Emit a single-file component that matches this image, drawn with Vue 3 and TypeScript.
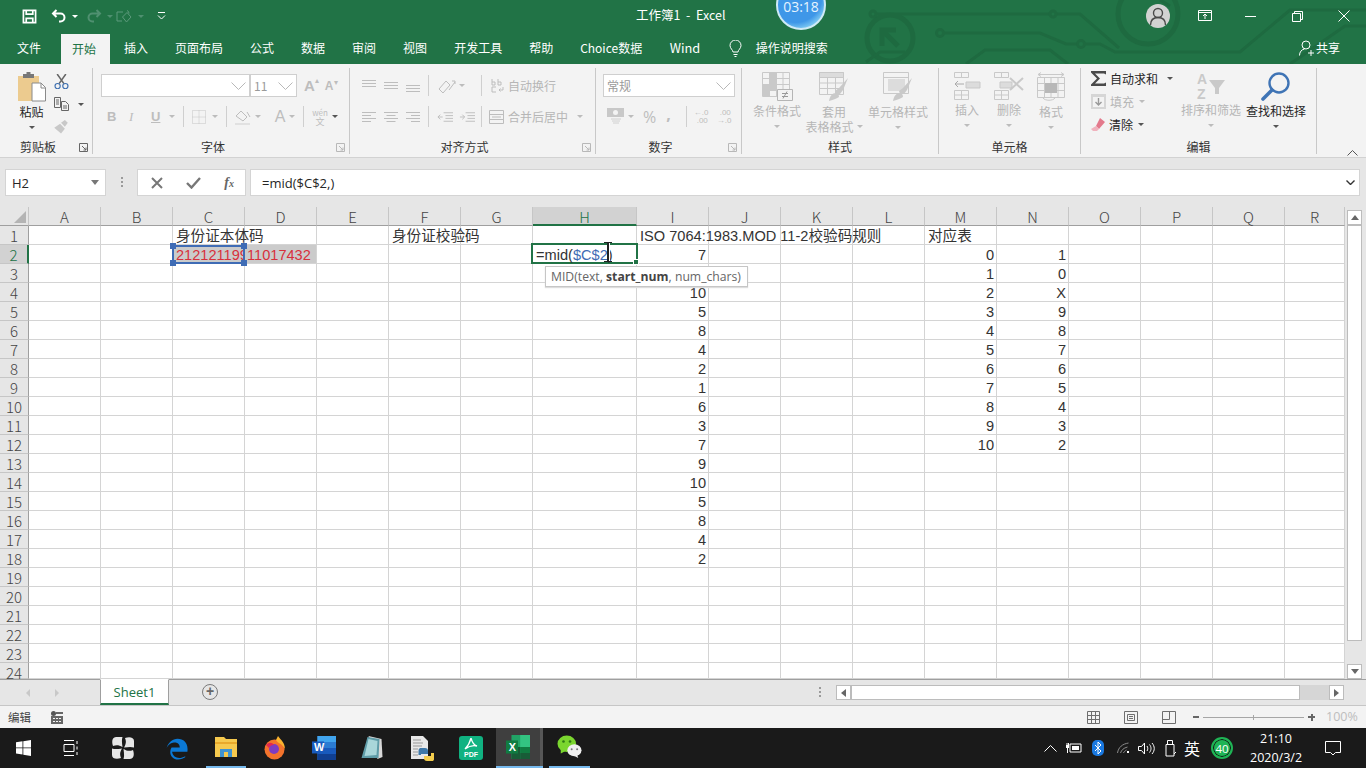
<script setup lang="ts">
// Excel window mock: ribbon, formula bar, sheet grid, status bar and Windows taskbar.
const colNames = ['A', 'B', 'C', 'D', 'E', 'F', 'G', 'H', 'I', 'J', 'K', 'L', 'M', 'N', 'O', 'P', 'Q', 'R'];
const rowNums = Array.from({ length: 24 }, (_, i) => i + 1);

const tabs = ['文件', '开始', '插入', '页面布局', '公式', '数据', '审阅', '视图', '开发工具', '帮助', 'Choice数据', 'Wind'];

const iCol = [7, 9, 10, 5, 8, 4, 2, 1, 6, 3, 7, 9, 10, 5, 8, 4, 2];
const mCol = [0, 1, 2, 3, 4, 5, 6, 7, 8, 9, 10];
const nCol = ['1', '0', 'X', '9', '8', '7', '6', '5', '4', '3', '2'];

function cellText(col: string, row: number): string {
  if (row === 1) {
    if (col === 'C') return '身份证本体码';
    if (col === 'F') return '身份证校验码';
    if (col === 'I') return 'ISO 7064:1983.MOD 11-2校验码规则';
    if (col === 'M') return '对应表';
  }
  if (row === 2 && col === 'C') return '212121199';
  if (row === 2 && col === 'D') return '11017432';
  if (col === 'I' && row >= 2 && row <= 18) return String(iCol[row - 2]);
  if (col === 'M' && row >= 2 && row <= 12) return String(mCol[row - 2]);
  if (col === 'N' && row >= 2 && row <= 12) return nCol[row - 2];
  return '';
}

function cellClass(col: string, row: number): string[] {
  const out: string[] = [];
  if (row > 1 && (col === 'I' || col === 'M' || col === 'N')) out.push('num');
  if (row === 2 && (col === 'C' || col === 'D')) out.push('marked');
  return out;
}
</script>

<template>
  <div class="app">
    <header class="chrome">
      <svg class="circuit" width="1366" height="64" viewBox="0 0 1366 64" fill="none" stroke="#1e6a40" stroke-width="3">
        <circle cx="890" cy="38" r="23" stroke-width="5" />
        <path d="M882 46V30h14M882 30l16 16" stroke-width="5" />
        <circle cx="1148" cy="14" r="30" stroke-width="5" />
        <circle cx="873" cy="14" r="3" />
        <path d="M876 14H1050M1057 14H1080L1119 48" />
        <circle cx="1053" cy="14" r="3" />
        <circle cx="940" cy="33" r="3.5" />
        <path d="M944 33H1040L1066 44H1078" />
        <circle cx="1081" cy="44" r="3.5" />
        <path d="M1085 44H1100L1115 52H1240L1290 10H1366" />
        <path d="M866 62L880 52H905M966 64L985 50H1050L1068 64M1290 64L1345 26H1366M1160 0L1170 6" />
      </svg>

      <div class="titlebar">
        <div class="qat">
          <svg width="15" height="15" viewBox="0 0 16 16" fill="none" stroke="#fff" stroke-width="1.8">
            <path d="M1.500 1.500h13v13h-13z" /><path d="M4.500 1.500v4h7v-4M4.500 14.500v-4.500h7v4.500" />
          </svg>
          <svg class="q-undo" width="16" height="14" viewBox="0 0 16 14" fill="none" stroke="#fff" stroke-width="2">
            <path d="M5.500 1L2 4.500 5.500 8M2 4.500h7.500a4 4 0 0 1 0 8H8" />
          </svg>
          <i class="tri tri-w" />
          <svg class="q-redo" width="16" height="14" viewBox="0 0 16 14" fill="none" stroke="#4f9070" stroke-width="2">
            <path d="M10.500 1L14 4.500 10.500 8M14 4.500H6.500a4 4 0 0 0 0 8H8" />
          </svg>
          <i class="tri tri-dim" />
          <svg class="q-form" width="17" height="16" viewBox="0 0 17 16" fill="none" stroke="#5d9a7c">
            <path d="M1 4h6M1 4v9h5M6.500 9L11 4.500 15 9l-4.500 5zM11 2.500a3 3 0 0 1 2 3" />
          </svg>
          <i class="tri tri-dim" />
          <svg class="q-more" width="9" height="8" viewBox="0 0 9 8" fill="none" stroke="#fff">
            <path d="M1 .5h7" /><path d="M1 3.500l3.500 3.500L8 3.500" />
          </svg>
        </div>
        <div class="doc-title">工作簿1&nbsp; -&nbsp; Excel</div>
        <div class="timer">03:18</div>
        <div class="winctl">
          <span class="avatar">
            <svg width="20" height="20" viewBox="0 0 20 20" fill="none" stroke="#4a4a4a" stroke-width="1.400">
              <circle cx="10" cy="7" r="4.500" /><path d="M2.500 19c0-5 3-7.500 7.500-7.500s7.500 2.500 7.500 7.500" />
            </svg>
          </span>
          <svg class="w-display" width="14" height="12" viewBox="0 0 14 12" fill="none" stroke="#fff">
            <path d="M.5 .5h13v10H.5zM.5 2.500h13M7 9V4.500M5 6l2-2 2 2" />
          </svg>
          <svg class="w-min" width="11" height="11" viewBox="0 0 11 11" stroke="#fff"><path d="M0 5.500h11" /></svg>
          <svg class="w-max" width="11" height="11" viewBox="0 0 11 11" fill="none" stroke="#fff">
            <path d="M.5 2.500h8v8h-8zM2.500 2.500v-2h8v8h-2" />
          </svg>
          <svg class="w-close" width="12" height="12" viewBox="0 0 12 12" stroke="#fff"><path d="M.5 .5l11 11M11.500 .5l-11 11" /></svg>
        </div>
      </div>

      <nav class="tabs">
        <span v-for="t in tabs" :key="t" class="tab" :class="{ active: t === '开始' }">{{ t }}</span>
        <svg class="bulb" width="13" height="17" viewBox="0 0 13 17" fill="none" stroke="#fff">
          <path d="M4 12c0-2-3-3.500-3-6.500a5.500 5.500 0 0 1 11 0c0 3-3 4.500-3 6.500zM4.500 14.500h4M5.500 16.500h2" />
        </svg>
        <span class="tab search">操作说明搜索</span>
        <span class="share">
          <svg width="15" height="16" viewBox="0 0 15 16" fill="none" stroke="#fff">
            <circle cx="7" cy="5" r="4" /><path d="M.5 15.500c0-3.500 2-6 5-6.500M9 13h6M12 10v6" />
          </svg>
          共享
        </span>
      </nav>
    </header>

    <section class="ribbon">
      <div class="group g-clip with-launcher">
        <div class="body clip-body">
          <div class="big paste">
            <svg width="29" height="30" viewBox="0 0 29 30">
              <path d="M1 4h21v25H1z" fill="#eccb8f" />
              <path d="M6 2h11v4H6z" fill="#777" /><path d="M9.500 0h4v3h-4z" fill="#777" />
              <path d="M15 11h9l4.500 4.500V29H15z" fill="#fff" stroke="#8a8a8a" />
              <path d="M24 11v5h4.500" fill="none" stroke="#8a8a8a" />
            </svg>
            <span class="on">粘贴</span>
            <i class="tri tri-k" />
          </div>
          <div class="clip-tools">
            <svg width="15" height="16" viewBox="0 0 15 16" fill="none">
              <path d="M3 0l7 10M12 0L5 10" stroke="#666" stroke-width="1.600" />
              <circle cx="3.500" cy="12.500" r="2.700" stroke="#3d6fb0" stroke-width="1.200" />
              <circle cx="11.500" cy="12.500" r="2.700" stroke="#3d6fb0" stroke-width="1.200" />
            </svg>
            <span class="copy-row">
              <svg width="15" height="14" viewBox="0 0 15 14" fill="none" stroke="#666">
                <path d="M.5 .5h6v10h-6zM2 3h3M2 5h3M2 7h3" /><path d="M7.500 4.500h4l3 3v6h-7z" fill="#f3f3f3" /><path d="M9 9h4M9 11h4" />
              </svg>
              <i class="tri tri-k" />
            </span>
            <svg width="15" height="15" viewBox="0 0 15 15">
              <path d="M0 9l6-4 5 5-4 5zM7 4l4-3 3 3-3 4z" fill="#c8c8c8" />
            </svg>
          </div>
        </div>
        <div class="label">剪贴板</div>
        <svg class="launcher dark" width="9" height="9" viewBox="0 0 9 9" fill="none"><path d="M.5 .5h8v8h-8zM3 3l4 4M7 4.500V7H4.500" /></svg>
      </div>

      <div class="group g-font with-launcher">
        <div class="body stack">
          <div class="row">
            <span class="combo font-name"><svg class="chev" width="15" height="8" viewBox="0 0 15 8"><path d="M.5 .5l7 7 7-7" /></svg></span>
            <span class="combo font-size"><b>11</b><svg class="chev" width="15" height="8" viewBox="0 0 15 8"><path d="M.5 .5l7 7 7-7" /></svg></span>
            <span class="grow-a big-a">A<sup>▴</sup></span>
            <span class="grow-a small-a">A<sup>▾</sup></span>
          </div>
          <div class="row row2 font-row">
            <span class="fmt bold">B</span>
            <span class="fmt ital">I</span>
            <span class="fmt under">U</span>
            <i class="tri" />
            <em class="sep" />
            <svg width="14" height="14" viewBox="0 0 14 14" fill="none" stroke="#c4c4c4" stroke-dasharray="1 1"><path d="M.5 .5h13v13H.5zM7 .5v13M.5 7h13" /></svg>
            <i class="tri t6" />
            <em class="sep" />
            <svg class="fill-ic" width="16" height="16" viewBox="0 0 16 16" fill="none" stroke="#bdbdbd">
              <path d="M1 7l5-5 6 6-4 4z" /><path d="M12 3l3 5" /><path d="M0 14h15v2H0z" fill="#e1e1e1" stroke="none" />
            </svg>
            <i class="tri" />
            <span class="fmt font-color">A</span>
            <i class="tri t1" />
            <em class="sep" />
            <span class="wen"><small>wén</small><span>文</span></span>
            <i class="tri tri-k" />
          </div>
        </div>
        <div class="label">字体</div>
        <svg class="launcher" width="9" height="9" viewBox="0 0 9 9" fill="none"><path d="M.5 .5h8v8h-8zM3 3l4 4M7 4.500V7H4.500" /></svg>
      </div>

      <div class="group g-align with-launcher">
        <div class="body stack">
          <div class="row align-row">
            <svg class="lines" width="14" height="12" viewBox="0 0 14 12"><path d="M0 .5h14M0 3.500h14M0 6.500h14" /></svg>
            <svg class="lines" width="14" height="12" viewBox="0 0 14 12"><path d="M0 2.500h14M0 5.500h14M0 8.500h14" /></svg>
            <svg class="lines" width="14" height="12" viewBox="0 0 14 12"><path d="M0 5.500h14M0 8.500h14M0 11.500h14" /></svg>
            <em class="sep" />
            <svg class="orient" width="20" height="16" viewBox="0 0 20 16" fill="none" stroke="#bdbdbd"><path d="M2 11l7-8 4 4-7 8zM12 12l6-8M15 3h3v3" /></svg>
            <i class="tri orient-tri" />
            <em class="sep wrap-sep" />
            <svg class="wrap-ic" width="13" height="15" viewBox="0 0 13 15" fill="none" stroke="#bdbdbd"><path d="M1 1v6M1 4h3v3H1M7 1v6M7 4h3v3H7M5 9H1v5h4M12 9v3H8M9.500 10.500L8 12l1.500 1.500" /></svg>
            <span class="txt">自动换行</span>
          </div>
          <div class="row row2 align-row">
            <svg class="lines" width="14" height="12" viewBox="0 0 14 12"><path d="M0 1.500h14M0 4.500h9M0 7.500h14M0 10.500h9" /></svg>
            <svg class="lines" width="14" height="12" viewBox="0 0 14 12"><path d="M0 1.500h14M2.500 4.500h9M0 7.500h14M2.500 10.500h9" /></svg>
            <svg class="lines" width="14" height="12" viewBox="0 0 14 12"><path d="M0 1.500h14M5 4.500h9M0 7.500h14M5 10.500h9" /></svg>
            <em class="sep" />
            <svg class="lines" width="16" height="12" viewBox="0 0 17 12"><path d="M7 1.500h10M9 4.500h8M9 7.500h8M7 10.500h10M6 6H1M3.500 3.500L1 6l2.500 2.500" /></svg>
            <svg class="lines indent-2" width="16" height="12" viewBox="0 0 17 12"><path d="M7 1.500h10M9 4.500h8M9 7.500h8M7 10.500h10M1 6h5M3.500 3.500L6 6 3.500 8.500" /></svg>
            <em class="sep merge-sep" />
            <svg class="merge-ic" width="15" height="14" viewBox="0 0 15 14" fill="none" stroke="#bdbdbd"><path d="M.5 .5h14v13H.5zM.5 4.500h14M.5 9.500h14M3 7h9" /></svg>
            <span class="txt">合并后居中</span>
            <i class="tri merge-tri" />
          </div>
        </div>
        <div class="label">对齐方式</div>
        <svg class="launcher" width="9" height="9" viewBox="0 0 9 9" fill="none"><path d="M.5 .5h8v8h-8zM3 3l4 4M7 4.500V7H4.500" /></svg>
      </div>

      <div class="group g-num with-launcher">
        <div class="body stack">
          <div class="row">
            <span class="combo num-fmt"><b>常规</b><svg class="chev" width="15" height="8" viewBox="0 0 15 8"><path d="M.5 .5l7 7 7-7" /></svg></span>
          </div>
          <div class="row row2 num-row">
            <svg width="18" height="17" viewBox="0 0 18 17"><path d="M0 0h17v9H0z" fill="#c8c8c8" /><circle cx="8.500" cy="4.500" r="2.500" fill="#f3f3f3" /><path d="M4 11h10M5 13h8M6 15h6" stroke="#d0d0d0" /></svg>
            <i class="tri" />
            <span class="pct">%</span>
            <span class="comma">,</span>
            <em class="sep" />
            <span class="dec"><small>←.0</small><small>.00</small></span>
            <span class="dec"><small>.00</small><small>→.0</small></span>
          </div>
        </div>
        <div class="label">数字</div>
        <svg class="launcher" width="9" height="9" viewBox="0 0 9 9" fill="none"><path d="M.5 .5h8v8h-8zM3 3l4 4M7 4.500V7H4.500" /></svg>
      </div>

      <div class="group g-style">
        <div class="body bigs">
          <div class="big cond">
            <svg width="31" height="29" viewBox="0 0 31 29" fill="none" stroke="#c9c9c9">
              <path d="M.5 .5h27v24H.5zM.5 6.500h27M.5 12.500h27M.5 18.500h27M7.500 .5v24M14.500 .5v24M21 .5v24" />
              <path d="M8 1h7v12H8zM1 13h14v6H1zM1 19h7v5H1z" fill="#c9c9c9" stroke="none" />
              <path d="M15.500 17.500h15v11h-15z" fill="#f3f3f3" stroke="#b5b5b5" />
              <path d="M20 21.500h6M20 24.500h6M25 19.500l-4 7" stroke="#999" />
            </svg>
            <span>条件格式</span>
            <i class="tri" />
          </div>
          <div class="big table-fmt">
            <svg width="30" height="30" viewBox="0 0 30 30" fill="none" stroke="#c9c9c9">
              <path d="M.5 .5h24v22H.5zM.5 5.500h24M.5 11h24M.5 16.500h24M8.500 .5v22M16.500 .5v22" />
              <path d="M.5 .5h24v5H.5z" fill="#dcdcdc" />
              <path d="M29 6l-9 10-4 3 1 3 4 0 3-4z" fill="#c9c9c9" stroke="none" />
              <path d="M10 29c1-5 3-8 7-8 2 0 3 2 3 4-2 1-5 3-10 4z" fill="#c9c9c9" stroke="none" />
            </svg>
            <span>套用</span>
            <span class="with-tri">表格格式<i class="tri" /></span>
          </div>
          <div class="big cell-fmt">
            <svg width="30" height="30" viewBox="0 0 30 30" fill="none" stroke="#c9c9c9">
              <path d="M.5 .5h25v21H.5zM.5 5.500h25" />
              <path d="M5 7h17v12H5z" fill="#dcdcdc" stroke="none" />
              <path d="M29 6l-9 10-4 3 1 3 4 0 3-4z" fill="#c9c9c9" stroke="none" />
              <path d="M10 29c1-5 3-8 7-8 2 0 3 2 3 4-2 1-5 3-10 4z" fill="#c9c9c9" stroke="none" />
            </svg>
            <span>单元格样式</span>
            <i class="tri" />
          </div>
        </div>
        <div class="label">样式</div>
      </div>

      <div class="group g-cells">
        <div class="body bigs">
          <div class="big cell-op">
            <svg width="27" height="28" viewBox="0 0 27 28" fill="none" stroke="#c9c9c9">
              <path d="M.5 .5h7v5h-7zM7.500 .5h7v5h-7zM.5 18.500h7v9h-7zM7.500 18.500h7v9h-7zM.5 23h14" />
              <path d="M12 10h14v6H12z" fill="#dcdcdc" /><path d="M1 12h9M4 9l-3 3 3 3" stroke="#aaa" />
            </svg>
            <span>插入</span><i class="tri" />
          </div>
          <div class="big cell-op">
            <svg width="30" height="28" viewBox="0 0 30 28" fill="none" stroke="#c9c9c9">
              <path d="M.5 .5h7v5h-7zM7.500 .5h7v5h-7zM.5 18.500h7v9h-7zM7.500 18.500h7v9h-7zM.5 23h14" />
              <path d="M6 10h12v6H6z" fill="#dcdcdc" /><path d="M16 6l13 12M29 6L16 18" stroke-width="2" />
            </svg>
            <span>删除</span><i class="tri" />
          </div>
          <div class="big cell-op">
            <svg width="28" height="30" viewBox="0 0 28 30" fill="none" stroke="#c9c9c9">
              <path d="M.5 5.500h27v20H.5zM.5 11.500h27M.5 18.500h27M7.500 5.500v20M14 5.500v20M21 5.500v20" />
              <path d="M8 11h12v10H8z" fill="#b8b8b8" stroke="none" />
              <path d="M1 2.500h26M4 .5l-3 2 3 2M24 .5l3 2-3 2M6 26c2 3 10 3 12 0" />
            </svg>
            <span>格式</span><i class="tri" />
          </div>
        </div>
        <div class="label">单元格</div>
      </div>

      <div class="group g-edit">
        <div class="body edit-body">
          <div class="edit-col">
            <span class="edit-item on">
              <svg width="15" height="15" viewBox="0 0 15 15"><path d="M0 0h15v3.500L13 2.500H4l5 5-5 5h9l2-1V15H0v-1.500L6 7.500 0 1.500z" fill="#4a4a4a" /></svg>
              自动求和<i class="tri tri-k auto-tri" />
            </span>
            <span class="edit-item">
              <svg width="15" height="15" viewBox="0 0 15 15" fill="none"><path d="M0 0h15v15H0z" fill="#d6d6d6" /><path d="M2 3h11v10H2z" fill="#f3f3f3" /><path d="M7.500 4v7M4.500 8l3 3 3-3" stroke="#9a9a9a" stroke-width="1.400" /></svg>
              填充<i class="tri" />
            </span>
            <span class="edit-item on">
              <svg width="14" height="13" viewBox="0 0 14 13"><path d="M9 0l5 4-6 7-3-3z" fill="#e3798c" /><path d="M5 8l3 3-2 2H2L0 11z" fill="#f0b2bd" /></svg>
              清除<i class="tri tri-k" />
            </span>
          </div>
          <div class="big sort">
            <svg width="30" height="28" viewBox="0 0 30 28" fill="none">
              <text x="1" y="12" font-size="14" font-weight="700" fill="#c9c9c9" font-family="Liberation Sans">A</text>
              <text x="1" y="27" font-size="14" font-weight="700" fill="#c9c9c9" font-family="Liberation Sans">Z</text>
              <path d="M13 8h16l-6 8v6h-4v-6z" fill="#c9c9c9" />
            </svg>
            <span>排序和筛选</span><i class="tri" />
          </div>
          <div class="big find on">
            <svg width="30" height="29" viewBox="0 0 30 29" fill="none" stroke="#3f74b5">
              <circle cx="18" cy="11" r="9.500" stroke-width="2.400" />
              <path d="M11 18L2 27" stroke-width="3.600" stroke-linecap="round" />
            </svg>
            <span>查找和选择</span><i class="tri tri-k" />
          </div>
        </div>
        <div class="label">编辑</div>
      </div>
      <svg class="collapse" width="11" height="6" viewBox="0 0 11 6" fill="none" stroke="#555"><path d="M.5 5.500l5-5 5 5" /></svg>
    </section>

    <div class="formula">
      <div class="namebox">H2<i class="tri tri-g" /></div>
      <div class="grip" />
      <div class="fx-box">
        <svg width="12" height="12" viewBox="0 0 12 12" stroke="#777" stroke-width="2"><path d="M1 1l10 10M11 1L1 11" /></svg>
        <svg width="15" height="12" viewBox="0 0 15 12" fill="none" stroke="#777" stroke-width="2.400"><path d="M1 6l4.500 4.500L14 1" /></svg>
        <span class="fx">f<small>x</small></span>
      </div>
      <div class="input">
        <span>=mid($C$2,)</span>
        <svg width="9" height="5" viewBox="0 0 9 5" fill="none" stroke="#333" stroke-width="1.400"><path d="M.5 .5l4 4 4-4" /></svg>
      </div>
    </div>

    <div class="sheet">
      <div class="grid">
        <div class="hd corner"><i /></div>
        <div v-for="c in colNames" :key="c" class="hd col-hd" :class="{ cur: c === 'H' }">{{ c }}</div>
        <template v-for="r in rowNums" :key="r">
          <div class="hd row-hd" :class="{ cur: r === 2 }">{{ r }}</div>
          <div v-for="c in colNames" :key="c" class="cell" :class="cellClass(c, r)">{{ cellText(c, r) }}</div>
        </template>
      </div>

      <div class="ref-box"><i class="h1" /><i class="h2" /><i class="h3" /><i class="h4" /></div>
      <div class="editor">=mid(<span>$C$2</span>)<i /></div>
      <div class="ibeam" />
      <div class="tip">MID(text, <b>start_num</b>, num_chars)</div>

      <div class="vscroll">
        <span class="sb-btn"><i class="arrow up" /></span>
        <span class="sb-thumb" />
        <span class="sb-btn"><i class="arrow down" /></span>
      </div>
    </div>

    <div class="tabbar">
      <span class="nav-arrow left" />
      <span class="nav-arrow right" />
      <span class="sheet-tab">Sheet1</span>
      <span class="add">+</span>
      <span class="dots" />
      <div class="hscroll">
        <span class="sb-btn"><i class="arrow left-a" /></span>
        <span class="h-thumb" />
        <span class="sb-btn"><i class="arrow right-a" /></span>
      </div>
    </div>

    <div class="status">
      <span class="mode">编辑</span>
      <svg width="12" height="13" viewBox="0 0 12 13"><circle cx="2.500" cy="2.500" r="2.500" fill="#555" /><path d="M5 1h7v2H5zM0 5h12v8H0z" fill="#666" /><path d="M2 7h2v1H2zM5 7h2v1H5zM8 7h2v1H8zM2 10h2v1H2zM5 10h2v1H5zM8 10h2v1H8z" fill="#f3f3f3" /></svg>
      <span class="views">
        <svg width="13" height="13" viewBox="0 0 13 13" fill="none" stroke="#6e6e6e"><path d="M.5 .5h12v12H.5zM4.500 .5v12M8.500 .5v12M.5 4.500h12M.5 8.500h12" /></svg>
        <svg width="14" height="13" viewBox="0 0 14 13" fill="none" stroke="#6e6e6e"><path d="M.5 .5h13v12H.5zM3.500 3.500h7v6h-7zM5 5.500h4M5 7.500h4" /></svg>
        <svg width="14" height="13" viewBox="0 0 14 13" fill="none" stroke="#6e6e6e"><path d="M.5 .5h13v12H.5zM.5 8.500h7v-8" /></svg>
      </span>
      <span class="zoom">
        <i class="z-minus" />
        <i class="z-track"><u /></i>
        <i class="z-plus" />
      </span>
      <span class="pct-label">100%</span>
    </div>

    <footer class="taskbar">
      <svg class="t-win" width="15" height="16" viewBox="0 0 15 16" fill="#fff"><path d="M0 2.300l6.500-1v6.200H0zM7.300 1.200L15 0v7.500H7.300zM0 8.300h6.500v6.300l-6.500-1zM7.300 8.300H15V16l-7.700-1.200z" /></svg>
      <svg class="t-view" width="15" height="16" viewBox="0 0 15 16" fill="none" stroke="#fff"><path d="M1 .5h10M1 15.500h10M1 4.500h10v7H1zM14 1v3M14 6.500v3M14 12v3" /></svg>
      <svg class="t-fan" width="22" height="22" viewBox="0 0 22 22" fill="#e6e6e6">
        <path d="M4 0h6.500C9.500 3 10 6 10.500 10 7 8 4.500 7.500 1 9 -.5 5 0 0 4 0z" />
        <path d="M22 4v6.500C19 9.500 16 10 12 10.500 14 7 14.500 4.500 13 1c4-1.500 9-1 9 3z" />
        <path d="M18 22h-6.500c1-3 .5-6 0-10 3.500 2 6 2.500 9.500 1 1.500 4 1 9-3 9z" />
        <path d="M0 18v-6.500c3 1 6 .5 10 0-2 3.500-2.500 6-1 9.500-4 1.500-9 1-9-3z" />
      </svg>
      <svg class="t-edge" width="22" height="23" viewBox="0 0 20 21" fill="none"><path d="M17.500 17.500c-5 3-11 2-12-4h14c1-8-3-12-9-12C6 1.500 2 5 .5 10 2.500 6 6 5 8 5c3 0 4.500 2 4.500 4.500H5c-3 5 0 11 6 11 2.500 0 5-1 6.500-2z" fill="#0b78d4" /></svg>
      <span class="t-folder">
        <svg width="22" height="20" viewBox="0 0 22 20"><path d="M0 0h9l2 2h11v18H0z" fill="#f6c94e" /><path d="M0 5h22v2H0z" fill="#e9a92b" /><path d="M5 12h12v8H5z" fill="#3f93d1" /><path d="M9 15h4v5H9z" fill="#f6c94e" /></svg>
      </span>
      <svg class="t-fox" width="23" height="24" viewBox="0 0 21 24"><circle cx="10.500" cy="13.500" r="10" fill="#f3732c" /><path d="M14 0c3 4 7 7 7 13-3-6-7-5-9-9z" fill="#fbb32f" /><circle cx="10" cy="13" r="5" fill="#7d3cc1" /><path d="M2 9c3-3 6-3 8 0-3 0-4 1-5 3z" fill="#e22850" /></svg>
      <svg class="t-word" width="24" height="24" viewBox="0 0 22 22"><path d="M5 0h17v22H5z" fill="#2b7cd3" /><path d="M5 0h17v5.500H5z" fill="#41a5ee" /><path d="M5 11h17v5.500H5z" fill="#185abd" /><path d="M5 16.500h17V22H5z" fill="#103f91" /><path d="M0 5h11v11H0z" fill="#185abd" /><text x="1.800" y="14" font-size="10" font-weight="700" fill="#fff" font-family="Liberation Sans">W</text></svg>
      <svg class="t-note" width="22" height="24" viewBox="0 0 21 24"><path d="M7 0l13 3 1 18-5 2z" fill="#d8d8d8" /><path d="M6 1l12 2-1 19-17 0z" fill="#5f9ca8" /><path d="M7 3l9 2-1 14-12 1z" fill="#a9d6da" /></svg>
      <svg class="t-py" width="23" height="25" viewBox="0 0 23 25"><path d="M0 0h12l5 5v18H0z" fill="#e8e8e8" /><path d="M2 4h8M2 7h10M2 10h9M2 13h5M2 16h5M2 19h5" stroke="#999" /><path d="M9 12h5a3 3 0 0 1 3 3v3H10v1H7.500v-4a3 3 0 0 1 1.500-3z" fill="#3e78a9" /><path d="M22 25h-6a3 3 0 0 1-3-3v-2h7v-3h3v5a3 3 0 0 1-1 3z" fill="#f4cd4d" /></svg>
      <span class="t-pdf">
        <svg width="14" height="12" viewBox="0 0 14 12" fill="none" stroke="#fff" stroke-width="1.300"><path d="M7 0c-1 4-3 8-6 11 4-3 8-4 12-3-3-1-5-4-6-8z" /></svg>
        <b>PDF</b>
      </span>
      <span class="t-excel">
        <svg width="24" height="24" viewBox="0 0 22 22"><path d="M5 0h17v22H5z" fill="#21a366" /><path d="M13 0h9v11h-9z" fill="#33c481" /><path d="M5 11h8v11H5z" fill="#185c37" /><path d="M13 11h9v5.500h-9z" fill="#107c41" /><path d="M13 16.500h9V22h-9z" fill="#185c37" /><path d="M0 5h11v12H0z" fill="#107c41" /><text x="2.500" y="14.500" font-size="10" font-weight="700" fill="#fff" font-family="Liberation Sans">X</text></svg>
      </span>
      <span class="t-chat">
        <svg width="25" height="24" viewBox="0 0 22 22"><ellipse cx="8.500" cy="8" rx="8.500" ry="7.500" fill="#7bd62f" /><path d="M3 13l0 4 4-2z" fill="#7bd62f" /><circle cx="5.500" cy="6" r="1.200" fill="#2e7a14" /><circle cx="11.500" cy="6" r="1.200" fill="#2e7a14" /><ellipse cx="15.500" cy="14" rx="6.500" ry="5.500" fill="#f0f0f0" /><path d="M18 18l1 3-4-2z" fill="#f0f0f0" /><circle cx="13" cy="13" r=".9" fill="#777" /><circle cx="18" cy="13" r=".9" fill="#777" /></svg>
      </span>

      <div class="tray">
        <svg width="13" height="7" viewBox="0 0 13 7" fill="none" stroke="#fff"><path d="M.5 6.500l6-6 6 6" /></svg>
        <svg class="tr-batt" width="16" height="10" viewBox="0 0 16 10"><path d="M4 1h11v8H4z" fill="none" stroke="#fff" /><path d="M6 3h7v4H6z" fill="#fff" /><path d="M0 2h3v3H0z" fill="#fff" /><path d="M1 0v2M2.500 0v2M1.500 5v5" stroke="#fff" /></svg>
        <svg class="tr-bt" width="12" height="16" viewBox="0 0 12 16"><rect width="12" height="16" rx="5" fill="#1978e0" /><path d="M3 5l6 6-3 3V2l3 3-6 6" fill="none" stroke="#fff" /></svg>
        <svg class="tr-wifi" width="13" height="12" viewBox="0 0 13 12" fill="none" stroke="#8b8b8b"><path d="M.5 11c1-6 5-9 11-10M3.500 11c1-3 3-5 7-6M6.500 11c.5-1.500 1.500-2 3-3" /><path d="M10 9h2v2h-2z" fill="#fff" stroke="none" /></svg>
        <svg class="tr-vol" width="17" height="13" viewBox="0 0 17 13" fill="none" stroke="#fff"><path d="M.5 4.500h3l3-3.500v11l-3-3.500h-3zM9 4c1 1.500 1 3.500 0 5M11.500 2.500c2 2.500 2 5.500 0 8M14 1c3 3.500 3 7.500 0 11" /></svg>
        <svg class="tr-usb" width="12" height="17" viewBox="0 0 12 17" fill="none" stroke="#fff"><path d="M2.500 .5h5v4h-5zM1 4.500h8V16H1zM9 14l2-2" /></svg>
        <span class="ime">英</span>
        <span class="badge">40</span>
        <span class="clock"><span>21:10</span><span>2020/3/2</span></span>
        <svg class="tr-note" width="16" height="15" viewBox="0 0 16 15" fill="none" stroke="#fff"><path d="M.5 .5h15v11h-5l-2.500 2.500L5.500 11.500h-5z" /></svg>
      </div>
    </footer>
  </div>
</template>

<style>
html, body { margin: 0; overflow: hidden; background: #fff; }
</style>

<style scoped>
.app {
  width: 1366px;
  height: 768px;
  display: flex;
  flex-direction: column;
  overflow: hidden;
  position: relative;
  font-family: "Noto Sans CJK SC", "Open Sans", sans-serif;
  font-size: 12px;
  color: #262626;
}
.app i, .app em { display: block; font-style: normal; }

/* title + tabs */
.chrome { position: relative; height: 64px; background: #217346; flex: none; color: #fff; }
.circuit { position: absolute; left: 0; top: 0; }
.titlebar { position: relative; height: 32px; display: flex; align-items: center; }
.qat { display: flex; align-items: center; padding-left: 22px; width: 500px; }
.q-undo { margin-left: 14px; }
.q-redo { margin-left: 8px; }
.q-form { margin-left: 3px; }
.q-more { margin-left: 13px; }
.tri { width: 0; height: 0; border: 3px solid transparent; border-top: 3.500px solid #bcbcbc; border-bottom: 0; flex: none; }
.tri-w { border-top-color: #fff; margin-left: 5px; }
.tri-dim { border-top-color: #4f9070; margin-left: 5px; }
.tri-k { border-top-color: #555; }
.tri-g { border-top-color: #777; border-width: 4px; border-top-width: 5px; border-bottom: 0; }
.doc-title { position: absolute; left: 636px; top: 5px; font-size: 12.500px; }
.timer {
  position: absolute;
  left: 776px;
  top: -20px;
  width: 50px;
  height: 50px;
  box-sizing: border-box;
  border-radius: 50%;
  padding-top: 18px;
  text-align: center;
  background: radial-gradient(circle at 38% 30%, #3f97e8 0 62%, #7cc8f2 78%, #cdeaf7 100%);
  border: 2px solid #cfeaf6;
  font: 14px/13px "Open Sans", sans-serif;
  color: #e6f4ff;
}
.winctl { position: absolute; left: 1146px; top: 3px; height: 26px; display: flex; align-items: center; }
.avatar { width: 24px; height: 24px; border-radius: 50%; background: #d2d2d2; display: flex; align-items: center; justify-content: center; overflow: hidden; }
.w-display { margin-left: 28px; }
.w-min { margin-left: 33px; }
.w-max { margin-left: 36px; }
.w-close { margin-left: 35px; }

.tabs { position: relative; height: 32px; display: flex; align-items: stretch; padding-left: 4px; }
.tab { display: flex; align-items: center; padding: 0 13.500px; font-size: 12px; line-height: 1; }
.tab:nth-child(1) { padding-left: 13px; padding-right: 20px; }
.tab.active { background: #f3f3f3; color: #217346; margin-top: 2px; padding: 0 14px 0 11px; }
.tab:nth-child(3) { padding-left: 14px; }
.tab:nth-child(11) { padding-right: 14px; }
.tab:nth-child(12) { font-size: 12.800px; }
.bulb { align-self: center; margin-left: 15px; }
.search { padding-left: 14px; }
.share { position: absolute; left: 1299px; top: 7px; display: flex; align-items: center; gap: 2px; font-size: 12px; }

/* ribbon */
.ribbon { position: relative; height: 94px; background: #f3f3f3; border-bottom: 1px solid #d2d2d2; display: flex; flex: none; box-sizing: border-box; }
.group { position: relative; display: flex; flex-direction: column; box-sizing: border-box; height: 86px; margin-top: 4px; border-right: 1px solid #c8c8c8; }
.body { flex: 1; min-height: 0; }
.label { height: 22px; line-height: 22px; text-align: center; font-size: 12px; color: #333; margin-top: 2px; margin-bottom: -4px; }
.with-launcher .label { padding-right: 16px; }
.launcher { position: absolute; right: 4px; bottom: 2px; stroke: #b8b8b8; }
.launcher.dark { stroke: #666; }
.g-clip { width: 93px; }
.g-font { width: 257px; }
.g-align { width: 246px; }
.g-num { width: 146px; }
.g-style { width: 197px; }
.g-cells { width: 142px; }
.g-edit { width: 236px; }
.collapse { position: absolute; left: 1347px; top: 86px; }

.big { display: flex; flex-direction: column; align-items: center; flex: none; font-size: 12px; line-height: 15px; color: #b6b6b6; }
.big svg { flex: none; margin-bottom: 2px; }
.big .tri { margin-top: 7px; }
.big.on, .on { color: #262626; }
.clip-body { display: flex; padding: 4px 0 0 17px; }
.paste { width: 29px; }
.clip-tools { display: flex; flex-direction: column; align-items: flex-start; gap: 8px; margin-left: 8px; padding-top: 2px; }
.copy-row { display: flex; align-items: center; gap: 9px; }

.stack { display: flex; flex-direction: column; padding-top: 7px; margin-top: -1px; }
.row { display: flex; align-items: center; height: 23px; flex: none; }
.row2 { margin-top: 8px; }
.combo { display: flex; align-items: center; justify-content: space-between; box-sizing: border-box; height: 23px; background: #fff; border: 1px solid #cfcfcf; padding: 0 3px 0 3px; color: #9a9a9a; font-size: 12px; }
.combo b { font-weight: 400; }
.chev { fill: none; stroke: #b8b8b8; }
.font-name { width: 149px; margin-left: 8px; justify-content: flex-end; }
.font-size { width: 47px; }
.grow-a { color: #bdbdbd; font: 700 15px "Liberation Sans", sans-serif; display: flex; }
.grow-a sup { font-size: 8px; line-height: 8px; font-weight: 400; }
.big-a { margin-left: 7px; font-size: 15px; }
.small-a { margin-left: 6px; font-size: 12px; }
.font-row { padding-left: 14px; }
.fmt { font-family: "Liberation Sans", sans-serif; color: #bdbdbd; font-size: 13px; }
.bold { font-weight: 700; width: 22px; }
.ital { font-style: italic; width: 22px; font-family: "Liberation Serif", serif; }
.under { font-weight: 700; text-decoration: underline; width: 14px; }
.font-row .sep { margin: 0 8px; }
.sep { width: 1px; height: 21px; background: #cfcfcf; flex: none; }
.font-row .tri { margin-left: 4px; }
.font-row .t6 { margin-left: 6px; }
.font-row .t1 { margin-left: 1px; }
.font-color { font-size: 16px; margin-left: 11px; width: 16px; text-align: center; }
.wen { display: flex; flex-direction: column; align-items: center; color: #bdbdbd; font-size: 9px; line-height: 9px; width: 16px; }
.wen small { font-size: 8px; }

.align-row { padding-left: 12px; gap: 8px; color: #bdbdbd; }
.lines { fill: none; stroke: #bdbdbd; flex: none; }
.indent-2 { margin-left: -2px; }
.orient-tri { margin-left: -6px; }
.wrap-sep { margin-left: 8px; }
.wrap-ic { margin-left: 1px; }
.merge-sep { margin-left: -2px; }
.merge-ic { margin-left: -1px; }
.txt { font-size: 12px; color: #b6b6b6; margin-left: -4px; white-space: nowrap; }
.merge-tri { margin-left: 1px; }
.num-fmt { width: 132px; margin-left: 7px; }
.num-row { padding-left: 11px; color: #bdbdbd; }
.num-row .tri { margin-left: 3px; }
.pct { font: 16px "Open Sans", sans-serif; margin-left: 9px; }
.comma { font: 700 16px "Open Sans", sans-serif; margin-left: 10px; margin-top: -6px; }
.num-row .sep { margin-left: 15px; margin-right: 7px; }
.dec { display: flex; flex-direction: column; font: 8px/8px "Liberation Sans", sans-serif; width: 14px; margin-right: 9px; text-align: right; white-space: nowrap; }
.dec small { font-size: 8px; }

.bigs { display: flex; padding-top: 4px; }
.cond { width: 70px; }
.table-fmt { width: 44px; }
.cell-fmt { width: 84px; }
.with-tri { display: flex; align-items: center; gap: 3px; white-space: nowrap; }
.with-tri .tri { margin-top: 0; }
.cell-op { width: 42px; }
.g-cells .bigs { padding-left: 7px; }
.edit-body { display: flex; padding: 0 0 0 10px; margin-top: -1px; }
.edit-col { display: flex; flex-direction: column; width: 90px; flex: none; }
.edit-item { display: flex; align-items: center; gap: 4px; height: 23px; flex: none; color: #b6b6b6; font-size: 12px; }
.edit-item .tri { margin-left: 1px; }
.edit-item.on { color: #262626; }
.edit-item .auto-tri { margin-left: 5px; }
.sort { width: 60px; padding-top: 5px; }
.sort svg { overflow: visible; }
.sort span, .find span { white-space: nowrap; }
.find { width: 68px; margin-left: 1px; padding-top: 5px; }

/* formula bar */
.formula { height: 49px; flex: none; background: #e6e6e6; display: flex; padding: 11px 6px 0 5px; box-sizing: border-box; font: 13px "Open Sans", sans-serif; }
.namebox, .fx-box, .input { height: 27px; background: #fff; border: 1px solid #d4d4d4; box-sizing: border-box; display: flex; align-items: center; }
.namebox { width: 101px; padding: 0 6px 0 6px; justify-content: space-between; }
.grip { width: 2px; height: 11px; margin: 8px 14px 0 15px; background: repeating-linear-gradient(#9a9a9a 0 2px, transparent 2px 4px); }
.fx-box { width: 109px; padding: 0 11px 0 13px; justify-content: space-between; border-right: 1px solid #d4d4d4; }
.fx { font: italic 700 14px "Liberation Serif", serif; color: #666; }
.fx small { font-size: 10px; }
.input { flex: 1; margin-left: 4px; padding: 0 4px 0 11px; justify-content: space-between; }

/* grid */
.sheet { position: relative; flex: 1; min-height: 0; background: #fff; }
.grid {
  display: grid;
  grid-template-columns: 29px repeat(7, 72px) 104px repeat(9, 72px) 60px;
  grid-template-rows: repeat(24, 19px) 16px;
  width: 1345px;
  height: 472px;
  overflow: hidden;
}
.hd { box-sizing: border-box; background: #e6e6e6; color: #444; text-align: center; border-right: 1px solid #c6c6c6; border-bottom: 1px solid #9f9f9f; font: 300 15px/18px "Noto Sans CJK SC", sans-serif; padding-top: 1px; }
.corner { position: relative; }
.corner i { position: absolute; right: 2px; bottom: 2px; width: 0; height: 0; border-left: 12px solid transparent; border-bottom: 12px solid #b4b4b4; }
.col-hd.cur { background: #d2d2d2; color: #217346; border-bottom: 2px solid #217346; }
.row-hd { border-bottom: 1px solid #c6c6c6; border-right-color: #9f9f9f; }
.row-hd.cur { background: #d2d2d2; color: #217346; border-right: 2px solid #217346; }
.cell { box-sizing: border-box; border-right: 1px solid #d4d4d4; border-bottom: 1px solid #d4d4d4; padding: 1px 3px 0; white-space: nowrap; color: #333; font: 14.600px/19px "Liberation Sans", "Noto Sans CJK SC", sans-serif; }
.cell.num { text-align: right; padding-right: 2px; }
.cell.marked { background: #cbcbcb; color: #d8303c; overflow: hidden; text-overflow: clip; }
.cell.marked + .cell.marked { padding-left: 2px; }

.ref-box { position: absolute; left: 172px; top: 38px; width: 73px; height: 19px; box-sizing: border-box; border: 2px solid #3f6cb5; }
.ref-box i { position: absolute; width: 6px; height: 6px; background: #3f6cb5; }
.ref-box .h1 { left: -4px; top: -4px; }
.ref-box .h2 { right: -4px; top: -4px; }
.ref-box .h3 { left: -4px; bottom: -4px; }
.ref-box .h4 { right: -4px; bottom: -4px; }
.editor { position: absolute; left: 531px; top: 36px; width: 107px; height: 21px; box-sizing: border-box; border: 2px solid #217346; background: #fff; padding: 1px 0 0 3px; font: 14.600px/19px "Liberation Sans", sans-serif; color: #333; }
.editor span { color: #3f6cb5; }
.editor i { position: absolute; right: -3px; bottom: -3px; width: 4px; height: 4px; background: #217346; border: 1px solid #fff; box-sizing: content-box; }
.ibeam { position: absolute; left: 607px; top: 35px; width: 2px; height: 20px; background: #222; box-shadow: 1px 0 0 #fff; }
.ibeam::before, .ibeam::after { content: ""; position: absolute; left: -3px; width: 8px; height: 1px; background: #222; }
.ibeam::before { top: 0; }
.ibeam::after { bottom: 0; }
.tip { position: absolute; left: 545px; top: 59px; width: 203px; height: 21px; box-sizing: border-box; background: #fff; border: 1px solid #c6c6c6; font: 12.200px/19px "Open Sans", sans-serif; color: #666; padding-left: 5px; white-space: nowrap; box-shadow: 0 1px 1px #ddd; }
.tip b { color: #444; }

.vscroll { position: absolute; left: 1345px; top: 0; width: 21px; height: 472px; background: #e6e6e6; box-sizing: border-box; padding: 3px 4px 0 2px; display: flex; flex-direction: column; }
.sb-btn { flex: none; width: 15px; height: 15px; background: #fff; border: 1px solid #bcbcbc; box-sizing: border-box; display: flex; align-items: center; justify-content: center; }
.sb-thumb { flex: none; width: 15px; height: 416px; background: #fff; border: 1px solid #bcbcbc; box-sizing: border-box; margin: 0 0 23px; }
.arrow { width: 0; height: 0; border: 4px solid transparent; }
.arrow.up { border-top: 0; border-bottom: 5px solid #666; }
.arrow.down { border-bottom: 0; border-top: 5px solid #666; }
.arrow.left-a { border-left: 0; border-right: 5px solid #666; }
.arrow.right-a { border-right: 0; border-left: 5px solid #666; }

/* sheet tabs */
.tabbar { flex: none; height: 27px; position: relative; box-sizing: border-box; background: #e6e6e6; border-top: 1px solid #9f9f9f; border-bottom: 1px solid #c6c6c6; display: flex; align-items: flex-start; }
.nav-arrow { width: 0; height: 0; margin-top: 9px; border: 4px solid transparent; }
.nav-arrow.left { margin-left: 26px; border-left: 0; border-right: 4px solid #c8c8c8; }
.nav-arrow.right { margin-left: 25px; border-right: 0; border-left: 4px solid #c8c8c8; }
.sheet-tab { margin-left: 41px; margin-top: -1px; width: 69px; height: 26px; box-sizing: border-box; background: #fff; border: 1px solid #9f9f9f; border-top-color: #fff; border-bottom: 2px solid #217346; color: #217346; text-align: center; font: 13px/24px "Open Sans", sans-serif; }
.add { margin-left: 33px; margin-top: 4px; width: 16px; height: 16px; box-sizing: border-box; border: 1px solid #7a7a7a; border-radius: 50%; text-align: center; font: 700 14px/13px "Liberation Sans", sans-serif; color: #666; }
.dots { margin-left: 601px; margin-top: 7px; width: 2px; height: 11px; background: repeating-linear-gradient(#9a9a9a 0 2px, transparent 2px 4px); }
.hscroll { position: absolute; left: 836px; top: 5px; width: 508px; height: 15px; display: flex; background: #d6d6d6; }
.h-thumb { width: 449px; margin-right: 29px; background: #fff; border: 1px solid #bcbcbc; box-sizing: border-box; flex: none; }

/* status */
.status { flex: none; height: 22px; background: #f3f3f3; display: flex; align-items: center; padding-left: 8px; position: relative; }
.mode { font-size: 11.500px; margin-right: 20px; color: #444; }
.views { position: absolute; left: 1087px; top: 5px; display: flex; gap: 24px; }
.zoom { position: absolute; left: 1193px; top: 6px; display: flex; align-items: center; height: 10px; }
.z-minus { width: 6px; height: 2px; background: #666; }
.z-track { position: relative; width: 101px; height: 1px; background: #a6a6a6; margin: 0 4px; }
.z-track u { position: absolute; left: 50px; top: -2px; width: 1px; height: 5px; background: #a6a6a6; }
.z-plus { position: relative; width: 7px; height: 2px; background: #666; }
.z-plus::after { content: ""; position: absolute; left: 2.500px; top: -2.500px; width: 2px; height: 7px; background: #666; }
.pct-label { position: absolute; left: 1326px; top: 2px; font: 12.500px "Open Sans", sans-serif; color: #bdbdbd; }

/* taskbar */
.taskbar { flex: none; height: 40px; background: #1a1a1a; display: flex; align-items: center; position: relative; color: #fff; }
.taskbar > svg { flex: none; }
.t-win { margin-left: 16px; }
.t-view { margin-left: 32px; }
.t-fan { margin-left: 34px; }
.t-edge { margin-left: 32px; }
.t-folder { margin-left: 18px; width: 40px; height: 40px; box-sizing: border-box; padding-left: 9px; display: flex; align-items: center; border-bottom: 2px solid #76b9ed; }
.t-fox { margin-left: 17px; }
.t-word { margin-left: 26px; }
.t-note { margin-left: 25px; }
.t-py { margin-left: 28px; }
.t-pdf { margin-left: 25px; width: 24px; height: 24px; border-radius: 3px; background: #10b281; display: flex; flex-direction: column; align-items: center; justify-content: center; line-height: 8px; }
.t-pdf b { font: 700 7px/7px "Liberation Sans", sans-serif; margin-top: 1px; }
.t-excel { margin-left: 13px; width: 47px; height: 40px; background: linear-gradient(90deg, #3f3f3f 0 44px, #565656 44px); box-sizing: border-box; border-bottom: 2px solid #76b9ed; display: flex; align-items: center; justify-content: center; padding-right: 3px; }
.t-chat { margin-left: 6px; width: 41px; height: 40px; box-sizing: border-box; border-bottom: 2px solid #76b9ed; display: flex; align-items: center; justify-content: center; }
.tray { position: absolute; left: 1044px; top: 0; height: 40px; display: flex; align-items: center; }
.tray > * { flex: none; }
.tr-batt { margin-left: 9px; }
.tr-bt { margin-left: 10px; }
.tr-wifi { margin-left: 13px; }
.tr-vol { margin-left: 8px; }
.tr-usb { margin-left: 10px; }
.ime { margin-left: 7px; font-size: 16px; }
.badge { margin-left: 11px; width: 22px; height: 22px; box-sizing: border-box; border-radius: 50%; background: #1fb455; border: 2px solid #1fb455; display: flex; align-items: center; justify-content: center; font: 11.500px "Open Sans", sans-serif; box-shadow: inset 0 0 0 1px #111; }
.clock { margin-left: 10px; width: 66px; display: flex; flex-direction: column; align-items: center; font: 12.500px/19px "Open Sans", sans-serif; }
.tr-note { margin-left: 16px; }
</style>
